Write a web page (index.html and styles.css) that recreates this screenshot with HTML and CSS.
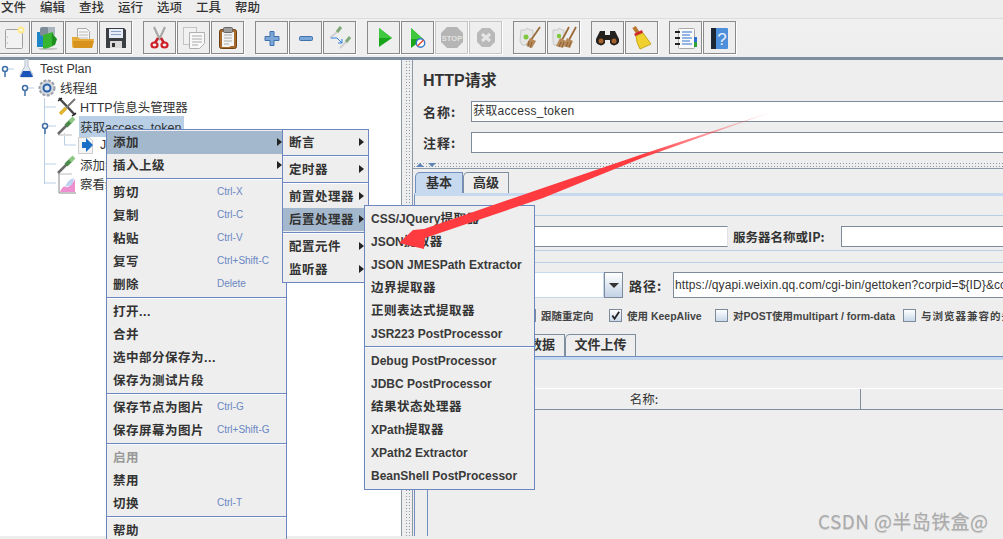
FILE: index.html
```html
<!DOCTYPE html>
<html lang="zh">
<head>
<meta charset="utf-8">
<title>Apache JMeter</title>
<link rel="stylesheet" href="styles.css">
</head>
<body>
<div class="app">
  <nav class="menubar">
    <span>文件</span><span>编辑</span><span>查找</span><span>运行</span><span>选项</span><span>工具</span><span>帮助</span>
  </nav>

  <div class="toolbar">
    <div class="tool-group first">
      <button class="tool"><svg viewBox="0 0 31 31"><rect x="7.500" y="7.500" width="17" height="19" rx="1" fill="#f2f2f2" stroke="#a0a0a0"/><circle cx="23" cy="8" r="3.500" fill="#ffe98a"/><circle cx="23" cy="8" r="1.600" fill="#fffbe0"/><circle cx="9.500" cy="15" r=".6" fill="#999"/><circle cx="9.500" cy="21" r=".6" fill="#999"/></svg></button>
      <button class="tool"><svg viewBox="0 0 31 31"><rect x="5" y="10" width="6" height="15" fill="#1c86c8"/><rect x="8" y="5" width="9" height="9" rx="2" fill="#7f8d98"/><path d="M16 5h7v8h-7z" fill="#a9b4bc"/><path d="M11 13l10-3v14l-7 3h-3z" fill="#37b52e"/><path d="M20 11l5 6-2 6-3 1z" fill="#1d8f20"/><path d="M6 26h18l2 1-6 1H8z" fill="#aaa" opacity=".6"/></svg></button>
      <button class="tool"><svg viewBox="0 0 31 31"><path d="M11.500 6.500h9l3 3v9h-12z" fill="#f6f6f6" stroke="#aaa"/><path d="M13 10h9M13 13h9M13 16h9" stroke="#bbb"/><path d="M6 15h6l2 2h14l-2 9H8q-2 0-2-2z" fill="#e7ab3a"/><path d="M7 19h21l-2 7H8z" fill="#d8931f"/></svg></button>
      <button class="tool"><svg viewBox="0 0 31 31"><path d="M6 6h18l2 2v18H6z" fill="#3b3e42"/><rect x="9" y="7" width="14" height="9" fill="#e6edf6"/><path d="M11 9.500h10M11 12.500h10" stroke="#8aa3c2"/><rect x="10" y="19" width="12" height="7" fill="#d9d9d9"/><rect x="12" y="21" width="3" height="4" fill="#333"/></svg></button>
    </div>
    <div class="tool-group">
      <button class="tool"><svg viewBox="0 0 31 31"><path d="M10 5l6 13M21 5l-6 13" stroke="#a8a8a8" stroke-width="2.200"/><path d="M14 16l-3 5M17 16l3 5" stroke="#c8202a" stroke-width="2.500"/><ellipse cx="10.500" cy="23" rx="3" ry="2.500" fill="none" stroke="#d01f28" stroke-width="2.200"/><ellipse cx="20.500" cy="23" rx="3" ry="2.500" fill="none" stroke="#d01f28" stroke-width="2.200"/></svg></button>
      <button class="tool"><svg viewBox="0 0 31 31"><rect x="5.500" y="5.500" width="13" height="17" fill="#f1f1f1" stroke="#c4c4c4"/><path d="M11.500 10.500h15v11l-5 5h-10z" fill="#f9f9f9" stroke="#b0b0b0"/><path d="M14 14h10M14 17h10M14 20h10M14 23h6" stroke="#aaa"/></svg></button>
      <button class="tool"><svg viewBox="0 0 31 31"><rect x="7.500" y="7.500" width="17" height="19" rx="2" fill="#a86a2a" stroke="#6d4215"/><path d="M10 10h12v14h-3l-2 1h-7z" fill="#f3f3f3"/><path d="M12 13h8M12 16h8M12 19h8M12 22h5" stroke="#aaa"/><rect x="11.500" y="5.500" width="9" height="5" rx="1" fill="#9c9c9c" stroke="#666"/></svg></button>
    </div>
    <div class="tool-group">
      <button class="tool"><svg viewBox="0 0 31 31"><path d="M14 9.500h4v5h5v4h-5v5h-4v-5H9v-4h5z" fill="#7ba6d8" stroke="#3f72ad"/></svg></button>
      <button class="tool"><svg viewBox="0 0 31 31"><rect x="9.500" y="14.500" width="13" height="4" rx="1" fill="#7ba6d8" stroke="#3f72ad"/></svg></button>
      <button class="tool"><svg viewBox="0 0 31 31"><path d="M6 16l7-6" stroke="#d0d0d0" stroke-width="2"/><path d="M13 10l4-5" stroke="#7fa878" stroke-width="3"/><path d="M16 26l6-6" stroke="#d0d0d0" stroke-width="2"/><path d="M22 20l4-5" stroke="#7fa878" stroke-width="3"/><path d="M7 16h6l5 5M18 17v4h-4" stroke="#2b80e0" fill="none"/></svg></button>
    </div>
    <div class="tool-group">
      <button class="tool"><svg viewBox="0 0 31 31"><path d="M11 6l13 10-13 9z" fill="#18a51c"/><path d="M11 6l13 10H11z" fill="#3fc83d"/></svg></button>
      <button class="tool"><svg viewBox="0 0 31 31"><path d="M9 6l12 11-12 9z" fill="#18a51c"/><path d="M9 6l12 11H9z" fill="#3fc83d"/><circle cx="18.500" cy="21" r="4.200" fill="#fff" stroke="#3575cc" stroke-width="1.400"/><path d="M15.500 24l6-6" stroke="#e0402a" stroke-width="1.300"/></svg></button>
      <button class="tool off"><svg viewBox="0 0 31 31"><path d="M11 5h10l6 6v9l-6 6H11l-6-6v-9z" fill="#b5b5b5"/><text class="stop-text" x="16" y="19" text-anchor="middle">STOP</text></svg></button>
      <button class="tool off"><svg viewBox="0 0 31 31"><path d="M12 6h8l5 5v9l-5 5h-8l-5-5v-9z" fill="#b9b9b9"/><path d="M12 12l8 7M20 12l-8 7" stroke="#e6e6e6" stroke-width="3"/></svg></button>
    </div>
    <div class="tool-group">
      <button class="tool"><svg viewBox="0 0 31 31"><path d="M7 8h5l1-2 3 2h3v6l-2 3 2 3-2 3H8l-2-4z" fill="#e6e6e6" stroke="#c8c8c8"/><circle cx="12" cy="15" r="2.500" fill="#7ec83c"/><path d="M26 5l-9 13" stroke="#9a6b3b" stroke-width="1.800"/><path d="M16 16l6 3-4 7-6-3z" fill="#b88a5a"/><path d="M15 19l-1 6M18 20l-2 6" stroke="#8a6136"/></svg></button>
      <button class="tool"><svg viewBox="0 0 31 31"><path d="M5 8h5l1-2 3 2h2v6l-2 3 2 3-2 3H6l-1-4z" fill="#e6e6e6" stroke="#c8c8c8"/><circle cx="11" cy="14" r="2.200" fill="#7ec83c"/><path d="M21 5l-7 13M28 5l-7 13" stroke="#9a6b3b" stroke-width="1.800"/><path d="M12 16l6 3-3 7-7-2z" fill="#b88a5a"/><path d="M19 16l6 3-3 7-7-2z" fill="#b88a5a"/><path d="M13 20l-2 5M16 20l-2 5M20 20l-2 5M23 20l-2 5" stroke="#8a6136"/></svg></button>
    </div>
    <div class="tool-group">
      <button class="tool"><svg viewBox="0 0 31 31"><path d="M8 9h5v4h5V9h5l4 8v3a5 5 0 0 1-9 1v-3h-5v3a5 5 0 0 1-9-1v-3z" fill="#25211f"/><circle cx="9" cy="19" r="2.500" fill="#a6622a"/><circle cx="22" cy="19" r="2.500" fill="#a6622a"/></svg></button>
      <button class="tool"><svg viewBox="0 0 31 31"><path d="M8 5l4 6" stroke="#b9752e" stroke-width="4"/><path d="M8 12l8-4 1 3-7 4z" fill="#d3212a"/><path d="M10 14l7-3 8 11-11 5q-4-7-4-13z" fill="#f0d12f" stroke="#c6a81c"/></svg></button>
    </div>
    <div class="tool-group">
      <button class="tool"><svg viewBox="0 0 31 31"><rect x="8.500" y="6.500" width="16" height="20" rx="1" fill="#fafafa" stroke="#aaa"/><path d="M5 10h5M5 16h5M5 22h5" stroke="#222" stroke-width="2"/><path d="M12 10h10M12 13h8M12 16h10M12 19h8M12 22h10" stroke="#2d6fd0"/><rect x="24" y="15" width="3" height="5" fill="#2d6fd0"/><rect x="24" y="20" width="3" height="5" fill="#2ea03a"/></svg></button>
      <button class="tool"><svg viewBox="0 0 31 31"><rect x="7" y="6" width="17" height="21" rx="1" fill="#4d8fdb"/><rect x="7" y="6" width="5" height="21" fill="#1d2733"/><text class="help-text" x="18" y="23" text-anchor="middle">?</text></svg></button>
    </div>
  </div>

  <main class="workspace">
    <section class="tree-pane">
      <svg class="tree-lines" width="120" height="140" viewBox="0 0 120 140">
        <path d="M8 9H14M28 28H34M44.500 38V124M44 47H56M48 66H56M44 104H56M44 123H56M64.500 73V85H76" fill="none" stroke="#b8cfe6"/>
        <circle cx="5" cy="9" r="2.500" fill="#fff" stroke="#3f6fa5" stroke-width="1.500"/>
        <path d="M5 12v5M25 31v5M45 69v5" stroke="#3f6fa5" stroke-width="1.500"/>
        <circle cx="25" cy="28" r="2.500" fill="#fff" stroke="#3f6fa5" stroke-width="1.500"/>
        <circle cx="45" cy="66" r="2.500" fill="#fff" stroke="#3f6fa5" stroke-width="1.500"/>
      </svg>
      <ul class="tree">
        <li class="node lvl0"><svg class="node-icon" viewBox="0 0 20 20"><path d="M8 0h3v7l5 9q0 2-2 2H5q-2 0-2-2l5-9z" fill="#e3e9f2" stroke="#b4bfcc"/><path d="M6 12h7l3 6H3z" fill="#1b54b8"/></svg><span>Test Plan</span></li>
        <li class="node lvl1"><svg class="node-icon" viewBox="0 0 20 20"><circle cx="10" cy="10" r="7.500" fill="#d4d7db" stroke="#9aa0a8" stroke-dasharray="3 1.500" stroke-width="2"/><circle cx="10" cy="10" r="4.500" fill="#2a62a8"/><circle cx="10" cy="10" r="2.500" fill="#dfe8f2"/></svg><span>线程组</span></li>
        <li class="node lvl2"><svg class="node-icon" viewBox="0 0 20 20"><path d="M2 1l16 17" stroke="#4a4a4a" stroke-width="2.500"/><path d="M18 2L9 11" stroke="#777" stroke-width="2"/><path d="M9 11l-6 6" stroke="#e0b330" stroke-width="3.500"/><path d="M1 4l4-3M15 19l4-3" stroke="#222" stroke-width="1.500"/></svg><span>HTTP信息头管理器</span></li>
        <li class="node lvl2"><svg class="node-icon" viewBox="0 0 20 20"><path d="M1 19h14" stroke="#ddd" stroke-width="2"/><path d="M1 18l9-9" stroke="#6a6a6a" stroke-width="2.500"/><path d="M9 10l5-5" stroke="#4b8a48" stroke-width="4"/><path d="M13 6l4-4" stroke="#8cc784" stroke-width="4"/></svg><span class="selected">获取access_token</span></li>
        <li class="node lvl3"><svg class="node-icon" viewBox="0 0 20 20"><path d="M1.500 2.500h11l3 3v13h-14z" fill="#f4f4f4" stroke="#ccc"/><path d="M9 3l7 7-7 7v-4H5V7h4z" fill="#1a6ec6"/></svg><span>JSON</span></li>
        <li class="node lvl2"><svg class="node-icon" viewBox="0 0 20 20"><path d="M1 19h14" stroke="#ddd" stroke-width="2"/><path d="M1 18l9-9" stroke="#6a6a6a" stroke-width="2.500"/><path d="M9 10l5-5" stroke="#4b8a48" stroke-width="4"/><path d="M13 6l4-4" stroke="#8cc784" stroke-width="4"/></svg><span>添加线</span></li>
        <li class="node lvl2"><svg class="node-icon" viewBox="0 0 20 20"><path d="M2 0v19h17" fill="none" stroke="#888"/><path d="M3 18q3-7 6-5t9-8v13z" fill="#ee8fcf"/><path d="M8 13q3-8 9-9l-2 7z" fill="#bcd2ef"/></svg><span>察看结果树</span></li>
      </ul>
    </section>

    <div class="split-v"><i></i></div>

    <section class="detail">
      <h1 class="title">HTTP请求</h1>
      <div class="field-row"><label>名称:</label><div class="input name-input">获取access_token</div></div>
      <div class="field-row"><label>注释:</label><div class="input"></div></div>
      <div class="split-h"><span class="tri up"></span><span class="tri down"></span></div>
      <div class="tabs"><span class="tab active">基本</span><span class="tab">高级</span></div>
      <div class="tab-body">
        <div class="web-server">
          <div class="input proto-input"></div>
          <label class="server-label">服务器名称或IP:</label>
          <div class="input grow"></div>
        </div>
        <div class="path-row">
          <div class="select"><div class="select-box"></div><div class="select-btn"><span></span></div></div>
          <label class="path-label">路径:</label>
          <div class="input path-input">https://qyapi.weixin.qq.com/cgi-bin/gettoken?corpid=${ID}&amp;corpsecret=${SECRET}</div>
        </div>
        <div class="checks">
          <span class="check c1"><i class="box"></i>跟随重定向</span>
          <span class="check c2"><i class="box on"><svg viewBox="0 0 12 12"><path d="M2.500 6l2.500 3.500L10 2" fill="none" stroke="#222" stroke-width="2"/></svg></i>使用 KeepAlive</span>
          <span class="check c3"><i class="box"></i>对POST使用multipart / form-data</span>
          <span class="check c4"><i class="box"></i>与浏览器兼容的头</span>
        </div>
        <div class="tabs sub-tabs"><span class="tab sub1">参数</span><span class="tab sub2">消息体数据</span><span class="tab sub3">文件上传</span></div>
        <div class="sub-body">
          <div class="table-head"><span class="th first-th">名称:</span><span class="th"></span></div>
        </div>
      </div>
    </section>
  </main>
</div>

<div class="popup main-menu">
  <div class="item active"><b>添加</b><i class="arrow"></i></div>
  <div class="item"><b>插入上级</b><i class="arrow"></i></div>
  <hr>
  <div class="item"><b>剪切</b><em>Ctrl-X</em></div>
  <div class="item"><b>复制</b><em>Ctrl-C</em></div>
  <div class="item"><b>粘贴</b><em>Ctrl-V</em></div>
  <div class="item"><b>复写</b><em>Ctrl+Shift-C</em></div>
  <div class="item"><b>删除</b><em>Delete</em></div>
  <hr>
  <div class="item"><b>打开...</b></div>
  <div class="item"><b>合并</b></div>
  <div class="item"><b>选中部分保存为...</b></div>
  <div class="item"><b>保存为测试片段</b></div>
  <hr>
  <div class="item"><b>保存节点为图片</b><em>Ctrl-G</em></div>
  <div class="item"><b>保存屏幕为图片</b><em>Ctrl+Shift-G</em></div>
  <hr>
  <div class="item disabled"><b>启用</b></div>
  <div class="item"><b>禁用</b></div>
  <div class="item"><b>切换</b><em>Ctrl-T</em></div>
  <hr>
  <div class="item"><b>帮助</b></div>
</div>

<div class="popup sub-menu">
  <div class="item"><b>断言</b><i class="arrow"></i></div>
  <hr>
  <div class="item"><b>定时器</b><i class="arrow"></i></div>
  <hr>
  <div class="item"><b>前置处理器</b><i class="arrow"></i></div>
  <div class="item active"><b>后置处理器</b><i class="arrow"></i></div>
  <hr>
  <div class="item"><b>配置元件</b><i class="arrow"></i></div>
  <div class="item"><b>监听器</b><i class="arrow"></i></div>
</div>

<div class="popup post-menu">
  <div class="item"><b><span class="lat">CSS/JQuery</span>提取器</b></div>
  <div class="item"><b><span class="lat">JSON</span>提取器</b></div>
  <div class="item latin"><b><span class="lat">JSON JMESPath Extractor</span></b></div>
  <div class="item"><b>边界提取器</b></div>
  <div class="item"><b>正则表达式提取器</b></div>
  <div class="item latin"><b><span class="lat">JSR223 PostProcessor</span></b></div>
  <hr>
  <div class="item latin"><b><span class="lat">Debug PostProcessor</span></b></div>
  <div class="item latin"><b><span class="lat">JDBC PostProcessor</span></b></div>
  <div class="item"><b>结果状态处理器</b></div>
  <div class="item"><b><span class="lat">XPath</span>提取器</b></div>
  <div class="item latin"><b><span class="lat">XPath2 Extractor</span></b></div>
  <div class="item latin"><b><span class="lat">BeanShell PostProcessor</span></b></div>
</div>

<svg class="red-arrow" width="1003" height="539" viewBox="0 0 1003 539">
  <defs>
    <linearGradient id="fade" gradientUnits="userSpaceOnUse" x1="780" y1="109" x2="640" y2="157">
      <stop offset="0" stop-color="#ff3b40" stop-opacity="0"/>
      <stop offset="1" stop-color="#ff3b40"/>
    </linearGradient>
  </defs>
  <path d="M780 109L640 155L540 189L424 229L413 230L399 243L424 249L425 238L543 198L642 158Z" fill="url(#fade)"/>
</svg>

<div class="watermark">CSDN @半岛铁盒@</div>
</body>
</html>
```
FILE: styles.css
```css
* { box-sizing: border-box; }
html, body { margin: 0; padding: 0; height: 539px; overflow: hidden; background: #eeeeee; }
body { width: 1003px; position: relative; font-family: "Liberation Sans", "Noto Sans CJK SC", sans-serif; color: #333; }

.app { display: flex; flex-direction: column; height: 539px; }

.menubar {
  height: 18px; flex: none; display: flex; gap: 13px; margin-left: 1px;
  font: 500 12.500px/14px "Noto Sans CJK SC", sans-serif; color: #333;
}
.menubar span { width: 26px; }

.toolbar {
  height: 42px; flex: none; display: flex; gap: 11px; padding: 2px 0 0 0;
  background: linear-gradient(#f0f0f0, #eeeeee);
  border-top: 1px solid #dcdcdc; border-bottom: 3px solid #7f8e9e;
  overflow: hidden;
}
.tool-group { display: flex; gap: 1px; }
.tool-group.first { margin-left: -3px; }
.tool {
  width: 33px; height: 33px; padding: 0; background: #eeeeee;
  border: 1px solid #8a8a8a; box-shadow: 1px 1px 0 #fff;
  display: flex; align-items: center; justify-content: center;
}
.tool svg { width: 31px; height: 31px; display: block; }
.tool.off { border-color: #c6c6c6; }
.stop-text { font: bold 7.500px "Liberation Sans", sans-serif; fill: #e3e3e3; }
.help-text { font: 17px "Liberation Sans", sans-serif; fill: #e8f0fb; }

.workspace { flex: 1; display: flex; min-height: 0; padding-bottom: 3px; }

.tree-pane { width: 401px; flex: none; background: #fff; position: relative; }
.tree-lines { position: absolute; left: 0; top: 0; }
.tree { list-style: none; margin: -1px 0 0; padding: 0; position: relative; }
.node { height: 19.200px; display: flex; align-items: center; font: 12.500px "Liberation Sans", "Noto Sans CJK SC", sans-serif; white-space: nowrap; color: #333; }
.node-icon { width: 20px; height: 20px; flex: none; margin-right: 3px; }
.lvl0 { padding-left: 17px; }
.lvl1 { padding-left: 37px; }
.lvl2 { padding-left: 57px; }
.lvl3 { padding-left: 77px; }
.selected { background: #b8cfe5; padding: 1px 3px 1px 1px; margin-left: -1px; }

.split-v {
  width: 12px; flex: none; border-left: 1px solid #8b98a8; border-right: 1px solid #8b98a8;
  padding: 0 3px; background: #eee;
}
.split-v i {
  display: block; height: 100%; width: 6px;
  background-image: radial-gradient(#8b98a8 .7px, transparent .9px);
  background-size: 3px 3px;
}

.detail { flex: 1; min-width: 0; background: #eeeeee; display: flex; flex-direction: column; overflow: hidden; }
.title { margin: 10px 0 0 10px; height: 21px; font: bold 16px/21px "Liberation Sans", "Noto Sans CJK SC", sans-serif; color: #333; }
.field-row { display: flex; align-items: center; height: 21px; margin-top: 10px; padding-left: 10px; }
.field-row + .field-row { margin-top: 10px; }
.field-row label { width: 48px; flex: none; font: bold 13px "Noto Sans CJK SC", sans-serif; letter-spacing: 1px; color: #333; }
.input {
  background: #fff; border: 1px solid #7c8a99; border-right-color: #dfe3e8;
  font: 12px/19px "Liberation Sans", "Noto Sans CJK SC", sans-serif; color: #333;
  white-space: nowrap; overflow: hidden; padding-left: 1px;
}
.field-row .input { flex: 1; height: 21px; margin-right: -5px; }
.name-input { letter-spacing: .3px; }

.split-h {
  height: 6px; margin-top: 9px; display: flex; gap: 2px; padding-left: 3px; align-items: center;
  background-image: radial-gradient(#8b98a8 .7px, transparent .9px);
  background-size: 3px 3px;
}
.tri { width: 0; height: 0; border-left: 4px solid transparent; border-right: 4px solid transparent; }
.tri.up { border-bottom: 4px solid #5f84b8; }
.tri.down { border-top: 4px solid #5f84b8; margin-left: 2px; }

.tabs { display: flex; height: 25px; padding: 3px 0 0 2px; border-top: 1px solid #8b98a8; flex: none; }
.tab {
  height: 22px; border: 1px solid #7f8e9e; border-bottom: 0; border-radius: 5px 0 0 0;
  font: bold 13px/17px "Noto Sans CJK SC", sans-serif; text-align: center; color: #333; background: #eee;
  width: 46px; white-space: nowrap;
}
.tab.active { width: 48px; background: #c6d9ef; border-color: #6f8fc0; }

.tab-body {
  flex: 1; display: flex; flex-direction: column; margin-left: 1px;
  border-top: 3px solid #c6d9ef; border-left: 1px solid #6f8fc0;
  background: #eee;
  background-image: linear-gradient(#b8cfe5, #b8cfe5), linear-gradient(#b8cfe5, #b8cfe5), linear-gradient(#b8cfe5, #b8cfe5);
  background-size: 100% 1px, 100% 1px, 100% 1px;
  background-position: 0 19px, 0 54px, 0 66px;
  background-repeat: no-repeat;
}
.web-server { display: flex; align-items: center; height: 21px; margin-top: 30px; padding-left: 12px; }
.proto-input { width: 301px; height: 21px; flex: none; }
.server-label { width: 108px; flex: none; margin-left: 5px; font: bold 12.500px "Noto Sans CJK SC", "Liberation Sans", sans-serif; color: #333; white-space: nowrap; }
.grow { flex: 1; height: 21px; margin-right: -5px; }

.path-row { display: flex; align-items: center; height: 26px; margin-top: 25px; padding-left: 12px; }
.select { width: 196px; flex: none; height: 26px; display: flex; }
.select-box { flex: 1; background: #fff; border: 1px solid #c6d9ef; }
.select-btn {
  width: 19px; flex: none; border: 1px solid #7c8a99;
  background: linear-gradient(#fff, #c2d2e6);
  display: flex; align-items: center; justify-content: center;
}
.select-btn span { width: 0; height: 0; border-left: 5px solid transparent; border-right: 5px solid transparent; border-top: 5px solid #333; }
.path-label { width: 50px; flex: none; padding-left: 6px; font: bold 13px "Noto Sans CJK SC", sans-serif; letter-spacing: 1px; color: #333; }
.path-input { flex: 1; height: 26px; line-height: 24px; padding-left: 1px; font-size: 12px; letter-spacing: .1px; margin-right: -5px; }

.checks { display: flex; height: 16px; margin-top: 9px; align-items: center; font: bold 10.500px "Liberation Sans", "Noto Sans CJK SC", sans-serif; color: #444; white-space: nowrap; padding-left: 108px; }
.check { display: flex; align-items: center; gap: 5px; flex: none; }
.box { display: block; width: 13px; height: 13px; flex: none; border: 1px solid #7c8a99; background: linear-gradient(#fff, #c8d8ea); }
.box svg { display: block; width: 11px; height: 11px; }
.c1 { width: 86px; }
.c2 { width: 106px; }
.c3 { width: 188px; }
.c4 { letter-spacing: 1px; }
.tabs.sub-tabs { border-top: 0; height: 25px; margin-top: 8px; padding: 3px 0 0 12px; flex: none; }
.sub1 { width: 53px; }
.sub2 { width: 85px; }
.sub3 { width: 71px; }
.sub-body { flex: 1; margin-left: 12px; border-top: 1px solid #6f8fc0; border-left: 1px solid #6f8fc0; background: #eee; box-shadow: inset 0 3px 0 #c6d9ef; padding-top: 31px; }
.table-head { height: 22px; display: flex; border-top: 1px solid #fff; border-bottom: 1px solid #7f8e9e; }
.th { font: 12.500px/20px "Noto Sans CJK SC", sans-serif; text-align: center; color: #333; flex: 1; }
.first-th { flex: none; width: 433px; border-right: 1px solid #7f8e9e; }

/* Popups float above the window at the place they were opened */
.popup {
  position: absolute; background: #eeeeee; border: 1px solid #6a87c2; padding: 1px 0;
  font-family: "Liberation Sans", "Noto Sans CJK SC", sans-serif;
}
.popup hr { margin: 1px 0; height: 2px; border: 0; border-top: 1px solid #6a87c2; border-bottom: 1px solid #fff; }
.item { height: 23px; display: flex; align-items: center; padding: 0 6px 2px; position: relative; }
.item.latin { padding-bottom: 0; }
.item b { font-weight: 700; font-size: 12.500px; letter-spacing: .5px; color: #333; white-space: nowrap; }
.item .lat { font-size: 12px; letter-spacing: 0; color: #3a3a3a; }
.item.active { background: #a3b8cc; }
.item.disabled b { color: #999; }
.item em { position: absolute; left: 110px; font: 10px "Liberation Sans", sans-serif; color: #6a87c2; white-space: nowrap; }
.arrow { margin-left: auto; width: 0; height: 0; border-left: 5px solid #222; border-top: 4px solid transparent; border-bottom: 4px solid transparent; margin-right: -2px; }

.main-menu { left: 106px; top: 129px; width: 181px; height: 420px; }
.sub-menu { left: 282px; top: 129px; width: 87px; height: 154px; }
.post-menu { left: 364px; top: 205px; width: 171px; height: 285px; }

.red-arrow { position: absolute; left: 0; top: 0; pointer-events: none; }

.watermark {
  position: absolute; left: 818px; top: 507px;
  font: 19px "Noto Sans CJK SC", sans-serif; color: #ababab; letter-spacing: .4px;
  text-shadow: 0 1px 0 #d2d2d2; white-space: nowrap;
}
```
